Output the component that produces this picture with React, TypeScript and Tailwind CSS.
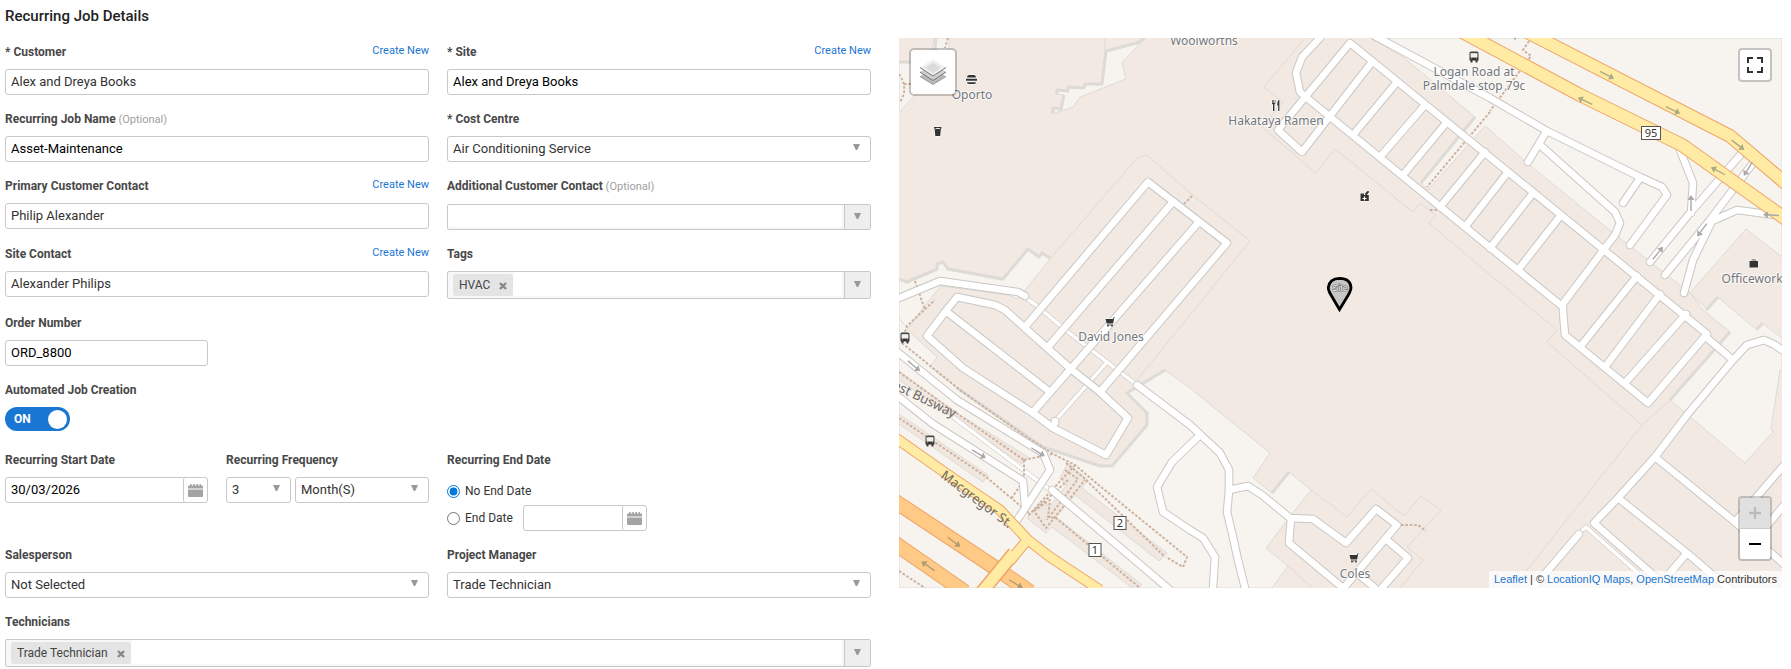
import { useId } from "react";
import type { ReactNode } from "react";

const FIELD =
  "h-[26px] w-full min-w-0 rounded-[3px] border border-[#c8c8c8] bg-white px-[5px] pb-px text-[13px] leading-4 outline-none";

/* ---------- form parts ---------- */

function Label({ htmlFor, optional, children }: { htmlFor?: string; optional?: boolean; children: ReactNode }) {
  return (
    <label htmlFor={htmlFor} className="text-[12px] leading-5 font-bold text-[#484848]">
      {children}
      {optional && <span className="text-[11px] leading-4 font-normal text-[#a0a0a0]"> (Optional)</span>}
    </label>
  );
}

function Row({ id, label, optional, createNew, children }: {
  id: string; label: string; optional?: boolean; createNew?: boolean; children: ReactNode;
}) {
  return (
    <div className="flex min-w-0 flex-col gap-[7px]">
      <div className="flex items-start justify-between">
        <Label htmlFor={id} optional={optional}>{label}</Label>
        {createNew && <a href="#new" className="text-[11px] leading-[18px] text-[#1976d2]">Create New</a>}
      </div>
      {children}
    </div>
  );
}

function TextField({ label, value, optional, createNew, muted }: {
  label: string; value: string; optional?: boolean; createNew?: boolean; muted?: boolean;
}) {
  const id = useId();
  return (
    <Row id={id} label={label} optional={optional} createNew={createNew}>
      <input id={id} type="text" defaultValue={value} className={`${FIELD} ${muted ? "text-[#333]" : "text-black"}`} />
    </Row>
  );
}

function Triangle() {
  return (
    <svg viewBox="0 0 7 6" className="h-[6px] w-[7px] fill-[#999]" aria-hidden="true">
      <path d="M0 0h7L4.2 6H2.8z" />
    </svg>
  );
}

function Select({ id, value, label }: { id?: string; value: string; label?: string }) {
  return (
    <div className="relative">
      <select id={id} aria-label={label} className={`${FIELD} block appearance-none text-[#333]`}>
        <option>{value}</option>
      </select>
      <span className="pointer-events-none absolute top-[8px] right-[11px]"><Triangle /></span>
    </div>
  );
}

function SelectField({ label, value }: { label: string; value: string }) {
  const id = useId();
  return <Row id={id} label={label}><Select id={id} value={value} /></Row>;
}

function MultiField({ label, chip, optional }: { label: string; chip?: string; optional?: boolean }) {
  const id = useId();
  return (
    <Row id={id} label={label} optional={optional}>
      <div className={`flex rounded-[2px] border border-[#c8c8c8] bg-[#f7f7f8] ${chip ? "h-[28px]" : "mt-px h-[26px]"}`}>
        {chip && (
          <span className="my-[2px] ml-[5px] flex items-center gap-[9px] rounded-[3px] bg-[#e4e4e4] px-[6px] text-[12px] leading-4 text-[#444]">
            {chip}
            <button type="button" aria-label={`Remove ${chip}`} className="mt-px">
              <svg viewBox="0 0 8 8" className="size-2 stroke-[#888]" strokeWidth="2.4"><path d="M1 1l6 6M7 1L1 7" /></svg>
            </button>
          </span>
        )}
        <input id={id} type="text" className="mr-[2px] mb-[2px] min-w-0 flex-1 rounded-[3px] bg-white outline-none" />
        <button type="button" aria-label={`Show ${label} options`} className="flex w-[26px] items-center justify-center border-l border-[#c8c8c8] bg-[#eee] pb-[2px]">
          <Triangle />
        </button>
      </div>
    </Row>
  );
}

function DateInput({ id, value, label }: { id?: string; value?: string; label?: string }) {
  return (
    <div className="flex h-[26px] rounded-[3px] border border-[#c8c8c8] bg-white">
      <input id={id} aria-label={label} type="text" defaultValue={value} className="min-w-0 flex-1 px-[5px] pb-px text-[13px] leading-4 text-black outline-none" />
      <button type="button" aria-label="Open calendar" className="flex w-[24px] items-center justify-center rounded-[2px] border-l border-[#c8c8c8]">
        <svg viewBox="0 0 15 13" className="h-[13px] w-[15px] fill-[#a3a3a3]" aria-hidden="true">
          <path d="M0 2.5Q0 1.500 1 1.500h1V0h1.600v1.500h1.600V0h1.600v1.500h1.600V0H10v1.500h1.500V0H13v1.500h1q1 0 1 1V4.500H0zM0 5.500h15v6.500q0 1-1 1H1q-1 0-1-1z" />
        </svg>
      </button>
    </div>
  );
}

/* ---------- map data ---------- */

const OPEN_LAND = [
  "899,62 930,62 934,38 950,38 947,62 915,95 899,113",
  "1105,51 1137,43 1145,38 1122,63 1126,79 1080,97 1073,107 1052,114 1052,108 1062,110 1064,95 1056,94 1056,89 1067,91 1068,87 1084,88 1085,84 1102,85",
  "899,280 907,283 937,270 937,265 943,262 948,270 1003,280 1028,249 1039,257 1042,253 1050,259 1018,299 1008,295 941,286 925,305 899,340",
  "899,318 912,334 937,357 930,367 957,388 1043,447 1100,466 1112,466 1147,425 1147,413 1127,393 1165,370 1190,388 1270,453 1253,478 1272,493 1289,472 1311,490 1291,515 1266,548 1288,566 1272,588 899,588",
  "1370,38 1403,57 1475,117 1421,183 1428,190 1485,126 1490,130 1527,163 1612,232 1690,293 1746,229 1782,257 1782,38",
  "1690,293 1703,310 1730,332 1670,400 1745,463 1773,432 1771,428 1780,370 1782,370 1782,338 1762,323 1757,330 1733,310 1718,297 1708,310",
];

const SHADOWS = [
  "M1145 38L1137 43L1106 51L1102 84H1085L1084 88L1068 87V91L1057 90V94M1064 95L1061 109L1053 108V114",
  "M899 279L907 282L937 269V264L943 262L948 269L1003 279L1028 249L1039 257L1042 253L1050 258",
  "M957 388L1043 447L1100 466H1112L1147 425V413L1127 393L1165 370",
  "M1475 117L1421 183", "M1730 332L1670 400", "M1272 493L1289 472", "M1706 310L1718 297M1757 329L1762 324",
  "M936 38L934 62M899 62H912",
];

const OUTLINES = [
  "M1050 259L1137 158L1147 155L1190 193L1250 241L1190 315L1137 380M1105 38V51",
  "M1305 38L1264 87L1283 102L1262 127L1316 173L1335 149L1413 212L1420 203L1436 215L1429 223L1490 275L1533 310L1557 330L1547 342L1642 425L1670 400M1642 425L1527 570L1513 588",
  "M1311 490L1347 517L1371 489L1404 516L1421 496L1441 510L1407 547L1423 560L1400 588M1288 566L1313 588",
];

const ROADS = [
  "M899 298L940 281L1018 292L1025 296",
  "M957 297L995 305L1005 310L1025 328L1072 370L1100 392L1128 418L1106 455L1053 428L1033 413L963 368L927 336L945 312Z",
  "M947 312L1050 392",
  "M1148 182L1025 327M1148 182L1227 243L1100 392M1172 203L1048 347M1198 223L1033 412",
  "M1137 385L1190 425L1220 453L1229 470V491L1227 512L1232 533L1238 560L1245 588",
  "M1198 437L1172 462L1157 487L1163 512L1190 530L1203 538L1215 557L1213 588",
  "M1229 490L1248 486L1262 495L1290 518L1313 519L1346 543L1376 509L1397 525L1342 590M1291 518L1289 543L1343 588M1387 540L1408 558L1382 588M1357 573L1375 588",
  "M1320 38L1302 57L1296 73L1300 92L1307 98L1563 307V312L1565 335L1648 403L1707 334L1350 43L1278 130L1302 152L1372 62",
  "M1397 82L1353 135M1425 105L1380 157M1447 122L1403 175M1485 152L1440 207M1508 172L1465 227M1533 193L1490 248M1561 215L1518 270M1605 248L1562 305M1637 276L1580 347M1660 294L1605 367M1686 314L1625 383",
  "M1375 36L1490 98L1547 131L1640 177L1662 187L1667 195L1630 245M1640 178L1623 203M1546 132L1528 162M1540 145L1615 212L1620 223L1615 235L1605 248",
  "M1680 150L1693 183L1691 213M1742 153L1690 213L1650 262M1753 163L1710 220L1665 275M1782 216L1737 210L1712 221L1693 260L1684 293",
  "M1782 350L1775 345L1764 340L1747 345L1733 360L1687 415L1655 457L1618 498L1594 523L1668 588M1707 338L1733 360M1655 457L1735 522L1785 565M1735 522L1785 464M1618 498L1687 553L1730 590M1687 553L1657 588M1755 540L1785 504M1579 534L1533 588",
  "M895 350L957 400L1043 453L1050 470L1014 525M895 394L933 424L1023 481L1025 506M1052 490L1123 550L1170 590",
  "M1055 423V421",
];

const FOOTWAYS = [
  "M1025 297L1037 306L1068 332L1107 362L1137 385M1107 362L1056 420",
  "M953 417L1050 490M1579 533L1586 527L1655 588",
];

const PATHS = [
  "M902 343L960 390L1025 436L1053 454L1075 465L1095 482L1187 557L1183 567L1166 557",
  "M899 372L952 410L1024 460M1024 460L1052 454M1024 460V480L1011 499M899 418L985 476L1030 514",
  "M1068 480L1034 511L1046 528L1085 480M1066 463L1084 478L1165 557M1034 511L1050 500L1048 517L1056 518L1140 588",
  "M1075 465L1052 490L1028 516M1065 470L1078 479L1047 520",
  "M905 332L907 326L935 300M915 281L925 310M899 571L925 588",
  "M948 38L945 48M899 74Q909 88 900 102M904 84H912",
  "M1490 112L1427 187M1529 41L1523 50L1531 56L1490 111M1184 204L1192 196M1430 210H1436L1442 205",
  "M1401 525H1418L1426 531",
];

const PLATFORMS = [
  "899,414 988,475 983,482 899,424",
  "899,371 952,410 1028,457 1022,464 952,417 899,380",
  "1068,463 1088,480 1082,488 1167,553 1159,561 1075,495 1056,517 1142,585 1135,590 1052,527 1046,533 1027,518 1040,502 1050,506 1066,486 1060,478",
];

type Poi = { x: number; y: number; text: string };
const LABELS: Poi[] = [
  { x: 1204, y: 45, text: "Woolworths" }, { x: 972, y: 99, text: "Oporto" }, { x: 1276, y: 125, text: "Hakataya Ramen" },
  { x: 1474, y: 76, text: "Logan Road at" }, { x: 1474, y: 90, text: "Palmdale stop 79c" }, { x: 1111, y: 341, text: "David Jones" },
  { x: 1355, y: 578, text: "Coles" }, { x: 1755, y: 283, text: "Officeworks" },
];

const ARROWS: [number, number, number, boolean?][] = [
  [1607, 75, 27], [1673, 110, 25], [1738, 145, 38], [1585, 101, 205], [1718, 171, 208], [1771, 215, 184, true],
  [1691, 203, 270, true], [1748, 169, 122, true], [1702, 230, 127, true], [1658, 253, 309, true],
  [914, 366, 40, true], [979, 454, 31, true], [1038, 452, 32, true], [954, 542, 37], [1016, 584, 32], [928, 566, 215],
];

function Arrow({ x, y, angle, gray }: { x: number; y: number; angle: number; gray?: boolean }) {
  return (
    <g transform={`translate(${x} ${y}) rotate(${angle})`} fill={gray ? "#a9a9a9" : "#6e7468"} opacity={gray ? 1 : 0.55}>
      <path d="M-8-.7H3V-3.6L8 0L3 3.6V.7H-8z" />
    </g>
  );
}

function Bus({ x, y }: { x: number; y: number }) {
  return (
    <g transform={`translate(${x} ${y})`}>
      <path d="M-4.500-4q0-1.500 1.500-1.500h6q1.500 0 1.500 1.500v7.500h-1v2h-2v-2h-3v2h-2v-2h-1z" fill="#333" stroke="#fff" strokeWidth="1" paintOrder="stroke" />
      <path d="M-3.200-3.700h6.400V.3h-6.400zM-3 1.600h1M2 1.600H3" fill="#f5f1ec" stroke="#f5f1ec" strokeWidth=".5" />
    </g>
  );
}

function Cart({ x, y }: { x: number; y: number }) {
  return (
    <path transform={`translate(${x} ${y})`} d="M-4.500-3H2.800L3.600-4.500H5V-4H4.100L3.200 1.600H-3.400zM-3 2.600H3V3.200H-3zM-2.800 3.200h1.600v1.300h-1.600zM1.200 3.200h1.600v1.300H1.200z" fill="#333" stroke="#fff" strokeWidth="1" paintOrder="stroke" />
  );
}

function Shield({ x, y, w, text }: { x: number; y: number; w: number; text: string }) {
  return (
    <g>
      <rect x={x - w / 2} y={y - 6.5} width={w} height="13" fill="#fff" stroke="#555" strokeWidth="1" />
      <text x={x} y={y + 4} textAnchor="middle" fontSize="11" fill="#333">{text}</text>
    </g>
  );
}

function MapDrawing() {
  return (
    <svg viewBox="899 38 883 550" className="block h-full w-full font-['Noto_Sans',sans-serif]" preserveAspectRatio="xMidYMid slice" role="img" aria-label="Map of the site">
      <rect x="899" y="38" width="883" height="550" fill="#f2e9e3" />
      {OPEN_LAND.map((p) => <polygon key={p} points={p} fill="#f7f4ef" stroke="#dedad5" strokeWidth="1" />)}
      {PLATFORMS.map((p) => <polygon key={p} points={p} fill="#f0e7e0" stroke="#dfdad5" strokeWidth="1" />)}
      <g fill="none" strokeLinejoin="round">
        {SHADOWS.map((d) => <path key={d} d={d} stroke="#dedad6" strokeWidth="3" />)}
        {OUTLINES.map((d) => <path key={d} d={d} stroke="#e0d9d4" strokeWidth="1" />)}
        {FOOTWAYS.map((d) => <path key={d} d={d} stroke="#cdc9c5" strokeWidth="5" strokeDasharray="2 1" />)}
        {FOOTWAYS.map((d) => <path key={d} d={d} stroke="#fff" strokeWidth="3.400" />)}
        {PATHS.map((d) => <path key={d} d={d} stroke="#ccb29e" strokeWidth="2" strokeDasharray="2.600 1.800" />)}
        <g strokeLinecap="round">
          {ROADS.map((d) => <path key={d} d={d} stroke="#cac7c4" strokeWidth="8.600" />)}
          {ROADS.map((d) => <path key={d} d={d} stroke="#fff" strokeWidth="6.600" />)}
        </g>
        <g stroke="#eda56b">
          <path d="M890 498L1000 571L1030 592M890 540L965 592" strokeWidth="15.500" />
          <path d="M890 498L1000 571L1030 592M890 540L965 592" stroke="#ffca85" strokeWidth="13.500" />
          <path d="M1527 32L1730 136L1790 187M1453 27L1580 95L1682 145L1790 222" strokeWidth="14" />
          <path d="M1028 539L1010 561M890 434L947 474L1000 510L1028 540L1050 557L1100 590" strokeWidth="11" />
          <path d="M1014 553L982 592" strokeWidth="14" />
        </g>
        <g stroke="#ffeba4">
          <path d="M1527 32L1730 136L1790 187M1453 27L1580 95L1682 145L1790 222" strokeWidth="12" />
          <path d="M1028 539L1010 561M890 434L947 474L1000 510L1028 540L1050 557L1100 590" strokeWidth="9" />
          <path d="M1014 553L982 592" strokeWidth="11" />
        </g>
      </g>
      {ARROWS.map(([x, y, angle, gray]) => <Arrow key={`${x}-${y}`} x={x} y={y} angle={angle} gray={gray} />)}

      <g fontSize="12" fill="#74777b" stroke="#fff" strokeOpacity=".7" strokeWidth="2" strokeLinejoin="round" paintOrder="stroke" textAnchor="middle">
        {LABELS.map((l) => <text key={l.text} x={l.x} y={l.y}>{l.text}</text>)}
      </g>
      <path d="M1515 38v1.500" stroke="#74777b" strokeWidth="1.200" />
      <g fontSize="13" fill="#6f675f">
        <text transform="translate(940 477) rotate(37)">Macgregor St.</text>
        <text transform="translate(892 388) rotate(26)">est Busway</text>
      </g>

      <Shield x={1651} y={133} w={19} text="95" />
      <Shield x={1120} y={523} w={12} text="2" />
      <Shield x={1095} y={550} w={12} text="1" />

      <Bus x={905} y={338} />
      <Bus x={930} y={441} />
      <Bus x={1474} y={57} />
      <Cart x={1110} y={322} />
      <Cart x={1354} y={558} />
      <g fill="#333" stroke="#fff" strokeWidth="1" paintOrder="stroke">
        <path d="M967 77.500q0-2.500 2-2.500h5q2 0 2 2.500zM966 78.800h11v2h-11zM967 82.200h9q0 1.800-1.800 1.800h-5.400q-1.800 0-1.800-1.800z" />
        <path d="M934.500 127.500h6.500l-.8 8.500h-4.900zM934 127h7.500v1.500H934z" />
        <path d="M1272 100v3q0 1.300 1 1.300V111h1.400v-6.700q1-.2 1-1.300v-3h-.7v3h-.7v-3h-.6v3h-.7v-3zM1278.800 100q-1.600 1-1.600 5.500h1V111h1.200V100z" />
        <path d="M1360.500 193.500h3.500v1.500h1.500l-.5-1.500 2.500-2.500h1.300v1.500l-1.500 1.500v1h1.500v6h-8.300z" />
        <path d="M1749.500 261h2.200v-1.500h4V261h2.300v6.500h-8.500z" />
      </g>
      <path d="M935.500 128.500h4.500" stroke="#e8e0da" strokeWidth="1" />
      <path d="M1362.500 198.500h4M1364.500 196.500v4" stroke="#fff" strokeWidth="1.200" />
      <path d="M1752.500 261v-.7h2.400v.7" stroke="#fff" strokeWidth=".7" fill="none" />

      <path d="M1339.500 309.500L1331.300 295.500Q1328.200 290.500 1328.300 287.500Q1329.500 278.500 1339.500 278.300Q1350.500 278.500 1351 287.500Q1351 290.500 1348 295.500Z" fill="#c6c6c6" stroke="#000" strokeWidth="2.800" />
      <g fontSize="9" fontFamily="Liberation Sans, sans-serif" textAnchor="middle">
        <text x="1340" y="291" fill="#fff" stroke="#555" strokeWidth="1" strokeLinejoin="round" paintOrder="stroke">Site</text>
      </g>
    </svg>
  );
}

function SiteMap() {
  return (
    <div className="relative aspect-[883/550] w-full overflow-hidden">
      <MapDrawing />
      <button type="button" aria-label="Layers" className="absolute top-[10px] left-[10px] flex size-12 items-center justify-center rounded-[5px] border-2 border-black/20 bg-white bg-clip-padding">
        <svg viewBox="0 0 26 26" className="size-[26px]" aria-hidden="true">
          <path d="M0 17.500L13 9l13 8.500L13 25.500z" fill="#b9b9b9" /><path d="M0 17.500L13 25.500l13-8" fill="none" stroke="#8a8a8a" strokeWidth=".8" />
          <path d="M0 13L13 5l13 8-13 8.500z" fill="#cfcfcf" /><path d="M0 13l13 8.500L26 13" fill="none" stroke="#777" strokeWidth="1" />
          <path d="M0 8.500L13 .5l13 8L13 17z" fill="#efefef" /><path d="M5 8.500L13 3.500l8 5-8 6z" fill="#dcdcdc" /><path d="M0 8.500L13 17l13-8.500" fill="none" stroke="#777" strokeWidth="1" />
        </svg>
      </button>
      <button type="button" aria-label="Full screen" className="absolute top-[10px] right-[10px] flex size-[34px] items-center justify-center rounded-[4px] border-2 border-black/20 bg-white bg-clip-padding">
        <svg viewBox="0 0 16 16" className="size-4 fill-none stroke-[#333]" strokeWidth="2" aria-hidden="true">
          <path d="M1 6V1h5M10 1h5v5M15 10v5h-5M6 15H1v-5" />
        </svg>
      </button>
      <div className="absolute right-[10px] bottom-[27px] flex w-[34px] flex-col overflow-hidden rounded-[4px] border-2 border-black/20 bg-clip-padding">
        <button type="button" disabled aria-label="Zoom in" className="flex h-[31px] items-center justify-center border-b border-[#ccc] bg-[#e0e0e0]">
          <svg viewBox="0 0 12 12" className="size-3 stroke-[#bbb]" strokeWidth="2.400"><path d="M0 6h12M6 0v12" /></svg>
        </button>
        <button type="button" aria-label="Zoom out" className="flex h-[30px] items-center justify-center bg-white">
          <svg viewBox="0 0 12 12" className="size-3 stroke-black" strokeWidth="2"><path d="M0 6h12" /></svg>
        </button>
      </div>
      <div className="absolute right-0 bottom-0 bg-white/70 px-[5px] font-['Liberation_Sans',sans-serif] text-[11px] leading-[17px] text-[#333]">
        <a href="#leaflet" className="text-[#1976d2]">Leaflet</a> | © <a href="#locationiq" className="text-[#1976d2]">LocationIQ Maps</a>, <a href="#osm" className="text-[#1976d2]">OpenStreetMap</a> Contributors
      </div>
    </div>
  );
}

/* ---------- page ---------- */

export default function App() {
  const start = useId();
  const count = useId();
  return (
    <main className="grid grid-cols-[866fr_883fr] gap-7 bg-white pr-[9px] pl-[5px] font-[Roboto,sans-serif] text-[#333]">
      <form>
        <h1 className="pt-[6px] pb-4 text-[15px] leading-5 font-medium text-[#222]">Recurring Job Details</h1>
        <div className="grid grid-cols-2 gap-x-[18px] gap-y-[14px]">
          <TextField label="* Customer" value="Alex and Dreya Books" createNew muted />
          <TextField label="* Site" value="Alex and Dreya Books" createNew />
          <TextField label="Recurring Job Name" value="Asset-Maintenance" optional />
          <SelectField label="* Cost Centre" value="Air Conditioning Service" />
          <TextField label="Primary Customer Contact" value="Philip Alexander" createNew muted />
          <MultiField label="Additional Customer Contact" optional />
          <TextField label="Site Contact" value="Alexander Philips" createNew muted />
          <MultiField label="Tags" chip="HVAC" />

          <div className="col-span-2 grid grid-cols-2 gap-x-[18px]">
            <div className="grid grid-cols-2 gap-x-[18px]">
              <TextField label="Order Number" value="ORD_8800" />
            </div>
          </div>

          <div className="col-span-2 mb-[5px] flex flex-col items-start gap-[7px]">
            <Label htmlFor="auto-jobs">Automated Job Creation</Label>
            <label className="flex h-6 w-[65px] cursor-pointer items-center justify-between rounded-full bg-[#1976d2] pr-[3px] pl-[9px] text-[12px] leading-4 font-bold text-white">
              <input id="auto-jobs" type="checkbox" defaultChecked className="sr-only" />
              ON
              <span className="size-[19px] rounded-full bg-white" />
            </label>
          </div>

          <div className="grid grid-cols-2 gap-x-[18px]">
            <Row id={start} label="Recurring Start Date"><DateInput id={start} value="30/03/2026" /></Row>
            <Row id={count} label="Recurring Frequency">
              <div className="grid grid-cols-[65fr_134fr] gap-1">
                <Select id={count} value="3" />
                <Select label="Frequency unit" value="Month(S)" />
              </div>
            </Row>
          </div>
          <fieldset>
            <legend className="text-[12px] leading-5 font-bold text-[#484848]">Recurring End Date</legend>
            <label className="mt-[7px] flex h-7 items-center gap-[5px] text-[12px] leading-4">
              <input type="radio" name="end" defaultChecked className="size-[13px] accent-[#0078d7]" />
              No End Date
            </label>
            <div className="flex items-center">
              <label className="flex items-center gap-[5px] text-[12px] leading-4">
                <input type="radio" name="end" className="size-[13px]" />
                End Date
              </label>
              <div className="ml-[10px] w-[124px]"><DateInput label="End date" /></div>
            </div>
          </fieldset>

          <SelectField label="Salesperson" value="Not Selected" />
          <SelectField label="Project Manager" value="Trade Technician" />
          <div className="col-span-2"><MultiField label="Technicians" chip="Trade Technician" /></div>
        </div>
      </form>
      <section className="pt-[38px]"><SiteMap /></section>
    </main>
  );
}
